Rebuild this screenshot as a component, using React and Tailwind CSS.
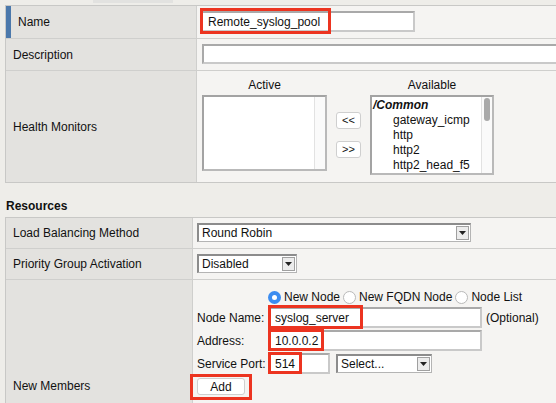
import React from "react";

const AVAILABLE = ["gateway_icmp", "http", "http2", "http2_head_f5"];

function TextBox({ className = "", value = "" }) {
  return (
    <input
      readOnly
      defaultValue={value}
      className={`block shrink-0 bg-white border-2 border-[#c9c9c9] border-t-[#a9a9a9] border-l-[#a9a9a9] outline-none text-[12px] text-[#111] ${className}`}
    />
  );
}

function FakeSelect({ className = "", value }) {
  return (
    <div className={`flex items-center bg-white border border-[#b4b4b4] border-t-2 border-l-2 border-t-[#8c8c8c] border-l-[#8c8c8c] ${className}`}>
      <span className="flex-1 pl-[3px] leading-none">{value}</span>
      <span className="w-[13px] h-[14px] mr-[1px] bg-[#ececec] border border-[#a0a0a0] flex items-center justify-center">
        <svg width="7" height="4" viewBox="0 0 7 4">
          <path d="M0 0h7L3.5 4z" fill="#222" />
        </svg>
      </span>
    </div>
  );
}

function RedBox({ className = "" }) {
  return <div className={`absolute border-[3px] border-[#ec3420] pointer-events-none ${className}`} />;
}

function Radio({ checked }) {
  return checked ? (
    <span className="w-[13px] h-[13px] rounded-full bg-[#3b8cf0] flex items-center justify-center">
      <span className="w-[5px] h-[5px] rounded-full bg-white" />
    </span>
  ) : (
    <span className="w-[13px] h-[13px] rounded-full bg-white border border-[#b9b9b9]" />
  );
}

function SmallButton({ children, className = "" }) {
  return (
    <div className={`flex items-center justify-center bg-white border border-[#cfcfcf] rounded-[3px] text-[11px] ${className}`}>
      {children}
    </div>
  );
}

export default function App() {
  return (
    <div className="w-[556px] h-[403px] overflow-hidden bg-[#eeede9] font-['Liberation_Sans',Arial,sans-serif] text-[12px] text-[#111]">
      {/* tab strip cut off at the top */}
      <div className="h-[5px] flex">
        <div className="ml-[93px] w-[80px] h-[3px] bg-[#e2e2e0]" />
      </div>

      {/* General table */}
      <div className="ml-[5px] border border-r-0 border-[#c8c8c6]">
        <div className="flex h-[33px] border-b border-[#cfcfcd]">
          <div className="w-[191px] shrink-0 flex items-center bg-[#e3e2df] border-r border-[#cfcfcd]">
            <div className="w-[5px] h-full bg-[#4b78ab]" />
            <span className="pl-[7px]">Name</span>
          </div>
          <div className="flex-1 min-w-0 bg-[#f5f4f2] pl-[3px] pt-[5px]">
            <div className="relative w-[215px]">
              <TextBox value="Remote_syslog_pool" className="w-[215px] h-[21px] pl-[6px]" />
              <RedBox className="left-0 top-[-3px] w-[131px] h-[26px]" />
            </div>
          </div>
        </div>

        <div className="flex h-[32px] border-b border-[#cfcfcd]">
          <div className="w-[191px] shrink-0 flex items-center bg-[#e3e2df] border-r border-[#cfcfcd] pl-[7px]">
            Description
          </div>
          <div className="flex-1 min-w-0 overflow-hidden bg-[#f5f4f2] pl-[5px] pt-[5px]">
            <TextBox className="w-[400px] h-[20px]" />
          </div>
        </div>

        <div className="flex h-[111px]">
          <div className="w-[191px] shrink-0 flex items-center bg-[#e3e2df] border-r border-[#cfcfcd] pl-[7px]">
            Health Monitors
          </div>
          <div className="flex-1 min-w-0 bg-[#f5f4f2] flex pl-[5px] pt-[7px]">
            <div className="w-[125px] flex flex-col">
              <div className="text-center leading-[15px] h-[17px]">Active</div>
              <div className="h-[76px] bg-white border-2 border-[#b9b9b9] border-t-[#a3a3a3] border-l-[#a3a3a3] flex justify-end">
                <div className="w-[11px] border-l border-[#e2e2e2] bg-[#fafafa]" />
              </div>
            </div>
            <div className="w-[25px] ml-[9px] pt-[34px] flex flex-col gap-[12px]">
              <SmallButton className="h-[17px]">&lt;&lt;</SmallButton>
              <SmallButton className="h-[17px]">&gt;&gt;</SmallButton>
            </div>
            <div className="w-[124px] ml-[9px] flex flex-col">
              <div className="text-center leading-[15px] h-[17px]">Available</div>
              <div className="h-[80px] bg-white border-2 border-[#b9b9b9] border-t-[#a3a3a3] border-l-[#a3a3a3] flex overflow-hidden">
                <div className="flex-1 pt-[1px] pl-[1px] leading-[15px] text-[12px]">
                  <div className="font-bold italic">/Common</div>
                  {AVAILABLE.map((m) => (
                    <div key={m} className="pl-[20px]">{m}</div>
                  ))}
                </div>
                <div className="w-[11px] border-l border-[#e2e2e2] bg-[#fafafa] pt-[1px] flex justify-center">
                  <div className="w-[6px] h-[23px] rounded-full bg-[#a9a9a9]" />
                </div>
              </div>
            </div>
          </div>
        </div>
      </div>

      {/* Resources */}
      <div className="h-[34px] pt-[16px] pl-[6px] font-bold leading-[15px]">Resources</div>

      <div className="ml-[5px] border-t border-l border-[#c8c8c6]">
        <div className="flex h-[31px] border-b border-[#cfcfcd]">
          <div className="w-[187px] shrink-0 flex items-center bg-[#e3e2df] border-r border-[#cfcfcd] pl-[7px]">
            Load Balancing Method
          </div>
          <div className="flex-1 min-w-0 bg-[#f5f4f2] pl-[4px] pt-[5px]">
            <FakeSelect value="Round Robin" className="w-[274px] h-[19px]" />
          </div>
        </div>

        <div className="flex h-[31px] border-b border-[#cfcfcd]">
          <div className="w-[187px] shrink-0 flex items-center bg-[#e3e2df] border-r border-[#cfcfcd] pl-[7px]">
            Priority Group Activation
          </div>
          <div className="flex-1 min-w-0 bg-[#f5f4f2] pl-[4px] pt-[5px]">
            <FakeSelect value="Disabled" className="w-[100px] h-[19px]" />
          </div>
        </div>

        <div className="flex h-[130px]">
          <div className="w-[187px] shrink-0 bg-[#e3e2df] border-r border-[#cfcfcd] pl-[7px] pt-[99px] leading-[15px]">
            New Members
          </div>
          <div className="flex-1 min-w-0 bg-[#f5f4f2] pl-[4px] pt-[9px]">
            <div className="flex items-center h-[16px] pl-[71px] gap-[3px]">
              <Radio checked />
              <span>New Node</span>
              <Radio />
              <span>New FQDN Node</span>
              <Radio />
              <span>Node List</span>
            </div>

            <div className="grid grid-cols-[71px_auto] items-center mt-[1px]">
              <span className="h-[23px] flex items-center">Node Name:</span>
              <div className="flex items-center h-[23px]">
                <div className="relative">
                  <TextBox value="syslog_server" className="w-[214px] h-[21px] pl-[5px]" />
                  <RedBox className="left-0 top-[-2px] w-[95px] h-[24px]" />
                </div>
                <span className="ml-[4px]">(Optional)</span>
              </div>

              <span className="h-[23px] flex items-center">Address:</span>
              <div className="flex items-center h-[23px]">
                <div className="relative">
                  <TextBox value="10.0.0.2" className="w-[214px] h-[21px] pl-[5px]" />
                  <RedBox className="left-0 top-[-1px] w-[56px] h-[22px]" />
                </div>
              </div>

              <span className="h-[23px] flex items-center">Service Port:</span>
              <div className="flex items-center h-[23px]">
                <div className="relative">
                  <TextBox value="514" className="w-[62px] h-[21px] pl-[5px]" />
                  <RedBox className="left-0 top-[-1px] w-[34px] h-[22px]" />
                </div>
                <FakeSelect value="Select..." className="ml-[6px] w-[96px] h-[19px]" />
              </div>
            </div>

            <div className="relative mt-[3px] w-[48px]">
              <SmallButton className="w-[48px] h-[17px] text-[12px]">Add</SmallButton>
              <RedBox className="left-[-7px] top-[-4px] w-[62px] h-[26px]" />
            </div>
          </div>
        </div>
      </div>
    </div>
  );
}
